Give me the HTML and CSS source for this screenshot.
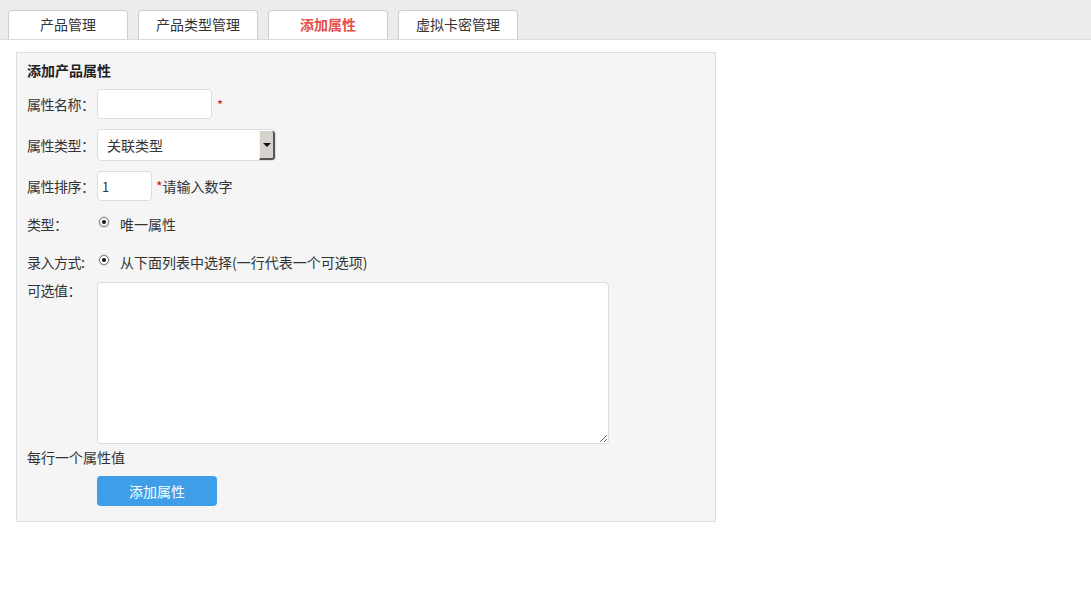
FILE: index.html
```html
<!DOCTYPE html>
<html lang="zh-CN">
<head>
    <meta charset="UTF-8">
    <title>添加属性</title>
    <link rel="stylesheet" href="styles.css">
</head>
<body>

<div class="tab-bar">
    <a class="tab">产品管理</a>
    <a class="tab">产品类型管理</a>
    <a class="tab active">添加属性</a>
    <a class="tab">虚拟卡密管理</a>
</div>

<div class="panel">
    <h3 class="panel-title">添加产品属性</h3>

    <div class="row row-name">
        <span class="label">属性名称：</span>
        <input type="text" class="txt txt-name">
        <span class="req">*</span>
    </div>

    <div class="row row-select">
        <span class="label">属性类型：</span>
        <div class="fake-select">
            <span class="fake-select-text">关联类型</span>
            <span class="fake-select-btn"><i class="arrow"></i></span>
        </div>
    </div>

    <div class="row row-sort">
        <span class="label">属性排序：</span>
        <input type="text" class="txt txt-sort" value="1">
        <span class="hint"><span class="req-inline">*</span>请输入数字</span>
    </div>

    <div class="row row-radio">
        <span class="label">类型：</span>
        <span class="radio"></span>
        <span>唯一属性</span>
    </div>

    <div class="row row-radio">
        <span class="label">录入方式:</span>
        <span class="radio"></span>
        <span>从下面列表中选择(一行代表一个可选项)</span>
    </div>

    <div class="row row-area">
        <span class="label">可选值：</span>
        <textarea class="values"></textarea>
    </div>

    <div class="note">每行一个属性值</div>

    <div class="actions">
        <button class="btn">添加属性</button>
    </div>
</div>

</body>
</html>
```

FILE: styles.css
```css
body {
    margin: 0;
    font-family: "Noto Sans CJK SC", "Liberation Sans", sans-serif;
    font-size: 14px;
    color: #333;
    background-color: #fff;
}

/* top tabs */
.tab-bar {
    display: flex;
    gap: 10px;
    height: 39px;
    padding-left: 8px;
    background-color: #ececec;
    border-bottom: 1px solid #dcdcdc;
}
.tab {
    display: block;
    width: 118px;
    height: 28px;
    margin-top: 10px;
    line-height: 27px;
    text-align: center;
    background-color: #fff;
    border: 1px solid #cfcfcf;
    border-bottom: none;
    border-radius: 4px 4px 0 0;
    color: #333;
    font-size: 14px;
}
.tab.active {
    color: #e5504a;
    font-weight: bold;
}

/* panel */
.panel {
    width: 678px;
    margin: 12px 0 0 16px;
    padding: 7px 10px 15px;
    background-color: #f5f5f5;
    border: 1px solid #dedede;
}
.panel-title {
    margin: 0;
    font-size: 14px;
    line-height: 20px;
    font-weight: bold;
    color: #222;
}

.row {
    display: flex;
    align-items: center;
}
.label {
    width: 70px;
    flex-shrink: 0;
    letter-spacing: -0.5px;
}

.row-name { margin-top: 9px; height: 30px; }
.row-select { margin-top: 10px; height: 32px; }
.row-sort { margin-top: 10px; height: 30px; }
.row-radio { margin-top: 8px; height: 30px; }
.row-area { margin-top: 5px; align-items: flex-start; }
.row-area .label { line-height: 16px; }

.txt {
    box-sizing: border-box;
    height: 30px;
    padding: 0 4px;
    border: 1px solid #dcdcdc;
    border-radius: 4px;
    background-color: #fff;
    font-family: inherit;
    font-size: 13px;
    color: #333;
    outline: none;
}
.txt-name { width: 115px; }
.txt-sort { width: 55px; }

.req {
    margin-left: 5px;
    color: #d2122b;
    font-size: 13px;
}
.hint {
    margin-left: 4px;
}
.req-inline {
    color: #d2122b;
}

/* select look-alike */
.fake-select {
    box-sizing: border-box;
    display: flex;
    width: 179px;
    height: 32px;
    background-color: #fff;
    border: 1px solid #dcdcdc;
    border-radius: 4px;
}
.fake-select-text {
    flex: 1;
    padding-left: 9px;
    line-height: 30px;
}
.fake-select-btn {
    position: relative;
    width: 13px;
    margin: 1px 0 0;
    background-color: #d6d3cc;
    border-left: 1px solid #f4f3ef;
    border-right: 2px solid #555;
    border-bottom: 2px solid #555;
    border-radius: 0 3px 3px 0;
}
.arrow {
    position: absolute;
    left: 3px;
    top: 12px;
    border-left: 4px solid transparent;
    border-right: 4px solid transparent;
    border-top: 4px solid #111;
}

/* radio look-alike */
.radio {
    position: relative;
    box-sizing: border-box;
    width: 10px;
    height: 10px;
    margin: -4px 11px 0 2px;
    border: 1px solid #777;
    border-radius: 50%;
    background-color: #fff;
    box-shadow: 0 0 0 1px #ddd;
}
.radio:before {
    content: "";
    position: absolute;
    left: 2px;
    top: 2px;
    width: 4px;
    height: 4px;
    border-radius: 50%;
    background-color: #111;
}

.values {
    box-sizing: border-box;
    width: 512px;
    height: 162px;
    border: 1px solid #dcdcdc;
    border-radius: 4px;
    background-color: #fff;
    outline: none;
}

.note {
    margin-top: 3px;
    line-height: 20px;
}

.actions {
    margin-top: 9px;
    padding-left: 70px;
}
.btn {
    width: 120px;
    height: 30px;
    border: none;
    border-radius: 4px;
    background-color: #3e9fe8;
    color: #fff;
    font-family: inherit;
    font-size: 14px;
}
```
